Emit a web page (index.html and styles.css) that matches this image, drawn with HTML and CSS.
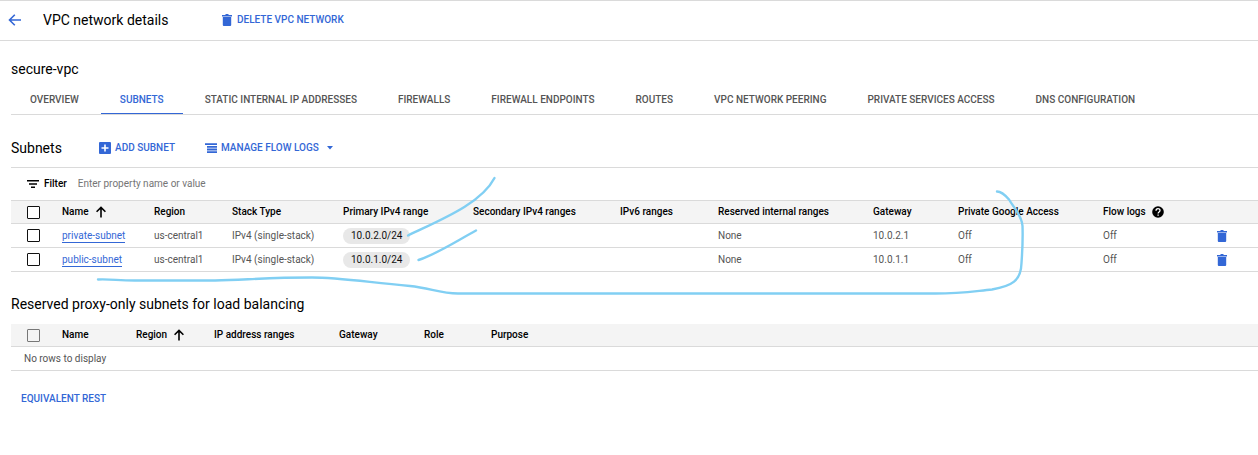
FILE: index.html
```html
<!DOCTYPE html>
<html lang="en">
<head>
<meta charset="utf-8">
<title>VPC network details</title>
<link rel="stylesheet" href="styles.css">
</head>
<body>
<svg class="sprite" aria-hidden="true">
  <symbol id="trash" viewBox="0 0 12 12"><path d="M1 1h3l1-1h2l1 1h3v1.500H1zM1.800 3h8.400v8q0 1-1 1H2.800q-1 0-1-1z"/></symbol>
  <symbol id="up" viewBox="0 0 12 12"><path d="M6 11.500V1.500M1.600 5.800L6 1.400l4.400 4.400" fill="none" stroke="currentColor" stroke-width="1.600"/></symbol>
</svg>
<header class="topbar">
  <button class="back" aria-label="Back"><svg width="14" height="12" viewBox="0 0 14 12"><path d="M13 6H1.500M6.800 0.700L1.500 6l5.300 5.300" fill="none" stroke="currentColor" stroke-width="1.600"/></svg></button>
  <h1 class="title">VPC network details</h1>
  <button class="action"><svg class="icon"><use href="#trash"/></svg>DELETE VPC NETWORK</button>
</header>
<main class="content">
  <h2 class="heading network">secure-vpc</h2>
  <nav class="tabs">
    <a class="tab" href="#overview">OVERVIEW</a>
    <a class="tab active" href="#subnets" aria-current="page">SUBNETS</a>
    <a class="tab" href="#static">STATIC INTERNAL IP ADDRESSES</a>
    <a class="tab" href="#firewalls">FIREWALLS</a>
    <a class="tab" href="#endpoints">FIREWALL ENDPOINTS</a>
    <a class="tab" href="#routes">ROUTES</a>
    <a class="tab" href="#peering">VPC NETWORK PEERING</a>
    <a class="tab" href="#services">PRIVATE SERVICES ACCESS</a>
    <a class="tab" href="#dns">DNS CONFIGURATION</a>
  </nav>
  <div class="toolbar">
    <h2 class="heading">Subnets</h2>
    <button class="action add"><svg class="icon" viewBox="0 0 12 12"><path fill-rule="evenodd" d="M1 0h10q1 0 1 1v10q0 1-1 1H1q-1 0-1-1V1q0-1 1-1zM5.200 2.500v2.700H2.500v1.600h2.700v2.700h1.600V6.800h2.700V5.200H6.800V2.500z"/></svg>ADD SUBNET</button>
    <button class="action manage"><svg class="icon" viewBox="0 0 12 12"><path d="M0 1.200h12v1.800H0zM2 3.900h10v1.800H2zM2 6.600h10v1.800H2zM2 9.300h10v1.800H2z"/></svg>MANAGE FLOW LOGS<svg class="caret" viewBox="0 0 6 4"><path d="M0 0h6L3 3.500z"/></svg></button>
  </div>
  <div class="filter">
    <svg class="filter-icon" viewBox="0 0 12 8"><path d="M0 0h12v1.600H0zM2 3.200h8v1.600H2zM4 6.400h4V8H4z"/></svg>
    <label for="filter">Filter</label>
    <input id="filter" class="filter-input" type="text" placeholder="Enter property name or value">
  </div>
  <table class="grid subnets">
    <colgroup><col class="c-check"><col class="c-92"><col class="c-78"><col class="c-111"><col class="c-130"><col class="c-147"><col class="c-98"><col class="c-155"><col class="c-85"><col class="c-145"><col class="c-113"><col></colgroup>
    <thead><tr>
      <th><input class="check" type="checkbox" aria-label="Select all subnets"></th>
      <th aria-sort="ascending"><span class="sorted">Name<svg class="sort"><use href="#up"/></svg></span></th>
      <th>Region</th><th>Stack Type</th><th>Primary IPv4 range</th><th>Secondary IPv4 ranges</th><th>IPv6 ranges</th><th>Reserved internal ranges</th><th>Gateway</th><th>Private Google Access</th>
      <th><span class="sorted">Flow logs<svg class="help" viewBox="0 0 12 12"><circle cx="6" cy="6" r="5.800"/><path d="M4 4.700C4 1.800 8 1.900 8 4.500 8 6 6.100 5.900 6.100 7.500M6.100 8.500v1.300" fill="none" stroke="#fff" stroke-width="1.300"/></svg></span></th><td></td>
    </tr></thead>
    <tbody>
      <tr>
        <td><input class="check" type="checkbox" aria-label="Select private-subnet"></td>
        <td><a class="link" href="#private-subnet">private-subnet</a></td><td>us-central1</td><td>IPv4 (single-stack)</td><td><span class="chip">10.0.2.0/24</span></td><td></td><td></td><td>None</td><td>10.0.2.1</td><td>Off</td><td>Off</td>
        <td><button class="remove" aria-label="Delete private-subnet"><svg class="icon"><use href="#trash"/></svg></button></td>
      </tr>
      <tr>
        <td><input class="check" type="checkbox" aria-label="Select public-subnet"></td>
        <td><a class="link" href="#public-subnet">public-subnet</a></td><td>us-central1</td><td>IPv4 (single-stack)</td><td><span class="chip">10.0.1.0/24</span></td><td></td><td></td><td>None</td><td>10.0.1.1</td><td>Off</td><td>Off</td>
        <td><button class="remove" aria-label="Delete public-subnet"><svg class="icon"><use href="#trash"/></svg></button></td>
      </tr>
    </tbody>
  </table>
  <h2 class="heading reserved">Reserved proxy-only subnets for load balancing</h2>
  <table class="grid proxies">
    <colgroup><col class="c-check"><col class="c-74"><col class="c-78"><col class="c-125"><col class="c-85"><col class="c-67"><col></colgroup>
    <thead><tr>
      <th><input class="check muted" type="checkbox" aria-label="Select all proxy-only subnets"></th>
      <th>Name</th><th aria-sort="ascending"><span class="sorted">Region<svg class="sort"><use href="#up"/></svg></span></th><th>IP address ranges</th><th>Gateway</th><th>Role</th><th>Purpose</th>
    </tr></thead>
    <tbody><tr><td class="empty" colspan="7">No rows to display</td></tr></tbody>
  </table>
  <button class="action rest">EQUIVALENT REST</button>
</main>
<svg class="ink" width="1258" height="455" viewBox="0 0 1258 455" aria-hidden="true">
  <path d="M408 235.500C440 220 481 204 494.500 178"/>
  <path d="M418.500 260C437 254 455 242 476 230.500"/>
  <path d="M98 279.500C112 279 117 280.500 135 280.500H215C245 280 265 277.500 312 277.500C335 277.500 350 280 410 286C430 288 440 293.500 458 293.500H930C960 294 975 291 992 289.500C1012 286 1021 281 1021.500 263C1022.500 249 1023 240 1022.500 226C1022 216 1014 208 1009 199.500C1006 196 1001 191.500 997 191.500"/>
</svg>
</body>
</html>
```

FILE: styles.css
```css
* { box-sizing: border-box; }
body {
  margin: 0;
  position: relative;
  background: #fff;
  color: #000;
  font: 10px/16px Roboto, sans-serif;
}
button {
  padding: 0;
  border: 0;
  background: none;
  color: #3367d6;
  font: inherit;
  cursor: pointer;
}
h1, h2 { margin: 0; font-weight: 400; }
svg { flex: none; fill: currentColor; }
.sprite { position: absolute; width: 0; height: 0; }
.icon { display: block; width: 12px; height: 12px; }

.topbar {
  display: flex;
  align-items: center;
  height: 41px;
  padding: 0 0 1px 8px;
  border-top: 1px solid #dadada;
  border-bottom: 1px solid #dadada;
}
.back { display: flex; width: 35px; }
.title, .heading { font-size: 14px; line-height: 20px; }
.title { width: 178px; }
.action {
  display: flex;
  align-items: center;
  gap: 4px;
  font-weight: 500;
}

.content { padding-left: 11px; }
.network { padding-top: 18px; }
.tabs {
  display: flex;
  gap: 3px;
  height: 36px;
  border-bottom: 1px solid #dadada;
}
.tab {
  padding: 13px 19px 0;
  color: #555;
  font-weight: 500;
  text-decoration: none;
  white-space: nowrap;
}
.tab.active {
  color: #3367d6;
  border-bottom: 1px solid #3367d6;
}
.toolbar {
  display: flex;
  align-items: flex-start;
  height: 53px;
  padding-top: 23px;
  border-bottom: 1px solid #dadada;
}
.toolbar .action { height: 20px; }
.toolbar .heading { width: 88px; }
.add { width: 106px; }
.caret { width: 6px; height: 4px; margin-left: 4px; }

.filter {
  display: flex;
  align-items: center;
  height: 32px;
  padding-left: 16px;
  gap: 5px;
  font-weight: 500;
}
.filter-icon { width: 12px; height: 8px; }
.filter-input {
  flex: 1;
  padding: 0 0 0 6px;
  border: 0;
  outline: 0;
  background: none;
  font: inherit;
  font-weight: 400;
}
.filter-input::placeholder { color: #757575; opacity: 1; }

.grid {
  width: 100%;
  table-layout: fixed;
  border-collapse: separate;
  border-spacing: 0;
}
.grid th, .grid td {
  height: 24px;
  padding: 0;
  border-bottom: 1px solid #dadada;
  text-align: left;
  vertical-align: middle;
  white-space: nowrap;
}
.grid thead th, .grid thead td { background: #f4f4f4; font-weight: 500; }
.grid tbody td { color: #555; }
.subnets thead th, .subnets thead td { border-top: 1px solid #dadada; }
.grid.proxies th { height: 23px; }
.grid tr > :first-child { padding-left: 16px; }
.grid tr > .empty { padding-left: 13px; }
.c-check { width: 51px; }
.c-67 { width: 67px; }
.c-74 { width: 74px; }
.c-78 { width: 78px; }
.c-85 { width: 85px; }
.c-92 { width: 92px; }
.c-98 { width: 98px; }
.c-111 { width: 111px; }
.c-113 { width: 113px; }
.c-125 { width: 125px; }
.c-130 { width: 130px; }
.c-145 { width: 145px; }
.c-147 { width: 147px; }
.c-155 { width: 155px; }
.check {
  appearance: none;
  display: block;
  width: 13px;
  height: 13px;
  margin: 0;
  border: 1px solid #111;
  border-radius: 1px;
  background: #fff;
}
.check.muted { border-color: #777; background: transparent; }
.sorted { display: flex; align-items: center; gap: 6px; }
.sort, .help { width: 12px; height: 12px; }
.link {
  display: inline-block;
  border-bottom: 1px solid #3367d6;
  color: #3367d6;
  line-height: 13px;
  text-decoration: none;
}
.chip {
  display: inline-block;
  padding: 0 8px;
  border-radius: 8px;
  background: #e8e8e8;
  color: #111;
}
.remove { display: block; padding-top: 1px; }
.reserved { padding: 22px 0 10px; }
.rest { margin: 20px 0 0 10px; }

.ink {
  position: absolute;
  top: 0;
  left: 0;
  fill: none;
  stroke: #81cff3;
  stroke-width: 2.4;
  stroke-linecap: round;
  pointer-events: none;
}
```
